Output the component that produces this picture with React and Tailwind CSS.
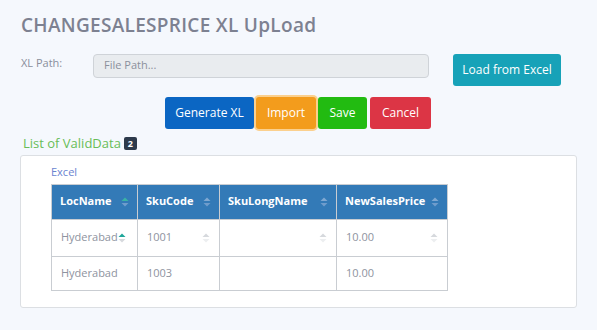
import React from "react"

function SortIcon({ up = "#9ca3af", down = "#9ca3af", className = "" }) {
  return (
    <svg width="8" height="10" viewBox="0 0 8 10" className={className}>
      <path d="M4 0.5 L7.5 4 L0.5 4 Z" fill={up} />
      <path d="M4 9.5 L7.5 6 L0.5 6 Z" fill={down} />
    </svg>
  )
}

function Th({ children, w, active }) {
  return (
    <th className={`${w} h-[35px] border border-[#c9cdd2] px-2 text-left text-[11px] font-bold text-white`}>
      <div className="flex items-center justify-between">
        <span>{children}</span>
        <SortIcon up={active ? "#3bb3a5" : "#7fa8d2"} down="#6f9ccc" />
      </div>
    </th>
  )
}

export default function App() {
  const font = { fontFamily: '"Open Sans", "Liberation Sans", sans-serif' }
  return (
    <div className="h-[330px] w-[597px] overflow-hidden bg-[#f5f8fd] text-[#7c8190]" style={font}>
      <h1 className="pl-[21px] pt-[11px] text-[19px] font-semibold tracking-[0.3px] text-[#7d8191]">
        CHANGESALESPRICE XL UpLoad
      </h1>

      <div className="mt-[14px] flex items-start pl-[21px]">
        <label className="w-[72px] pt-[1px] text-[11px] text-[#8a8f9c]">XL Path:</label>
        <div className="flex h-[24px] w-[336px] items-center rounded-[4px] border border-[#cfd3d8] bg-[#e9ecef] pl-[10px] text-[11px] text-[#8b909c]">
          File Path...
        </div>
        <button className="ml-[24px] h-[32px] w-[108px] rounded-[3px] bg-[#17a2b8] text-[12px] text-white">
          Load from Excel
        </button>
      </div>

      <div className="mt-[11px] flex gap-[2px] pl-[165px]">
        <button className="h-[32px] w-[89px] rounded-[3px] bg-[#0b66c3] text-[12px] text-white">Generate XL</button>
        <button className="h-[32px] w-[60px] rounded-[3px] bg-[#f39c1c] text-[12px] text-white ring-2 ring-[#fbd08e]">Import</button>
        <button className="h-[32px] w-[49px] rounded-[3px] bg-[#22bb11] text-[12px] text-white">Save</button>
        <button className="ml-[1px] h-[32px] w-[61px] rounded-[3px] bg-[#dc3545] text-[12px] text-white">Cancel</button>
      </div>

      <div className="mt-[5px] flex items-center pl-[23px]">
        <span className="text-[13px] text-[#68bd58]">List of ValidData</span>
        <span className="ml-[3px] flex h-[13px] w-[13px] items-center justify-center rounded-[2px] bg-[#2d3a4b] text-[9px] font-bold text-white">2</span>
      </div>

      <div className="mx-[20px] mt-[2px] h-[153px] rounded-[3px] border border-[#dcdfe3] bg-white pl-[30px] pt-[8px]">
        <div className="text-[11px] text-[#6a84d0]">Excel</div>
        <table className="mt-[3px] border-collapse text-[11px]">
          <thead className="bg-[#337ab7]">
            <tr>
              <Th w="w-[86px]" active>LocName</Th>
              <Th w="w-[82px]">SkuCode</Th>
              <Th w="w-[117px]">SkuLongName</Th>
              <Th w="w-[111px]">NewSalesPrice</Th>
            </tr>
          </thead>
          <tbody className="text-[#8e93a0]">
            <tr className="h-[37px]">
              <td className="border border-[#c9cdd2] pl-[9px]">
                <div className="flex items-center">
                  <span>Hyderabad</span>
                  <SortIcon up="#1fa79a" down="#d6d9dd" />
                </div>
              </td>
              <td className="border border-[#c9cdd2] px-[9px]">
                <div className="flex items-center justify-between">
                  <span>1001</span>
                  <SortIcon up="#d6d9dd" down="#eceef0" />
                </div>
              </td>
              <td className="border border-[#c9cdd2] px-[9px]">
                <div className="flex items-center justify-end">
                  <SortIcon up="#d6d9dd" down="#eceef0" />
                </div>
              </td>
              <td className="border border-[#c9cdd2] px-[9px]">
                <div className="flex items-center justify-between">
                  <span>10.00</span>
                  <SortIcon up="#d6d9dd" down="#eceef0" />
                </div>
              </td>
            </tr>
            <tr className="h-[34px]">
              <td className="border border-[#c9cdd2] pl-[9px]">Hyderabad</td>
              <td className="border border-[#c9cdd2] pl-[9px]">1003</td>
              <td className="border border-[#c9cdd2]"></td>
              <td className="border border-[#c9cdd2] pl-[9px]">10.00</td>
            </tr>
          </tbody>
        </table>
      </div>
    </div>
  )
}
